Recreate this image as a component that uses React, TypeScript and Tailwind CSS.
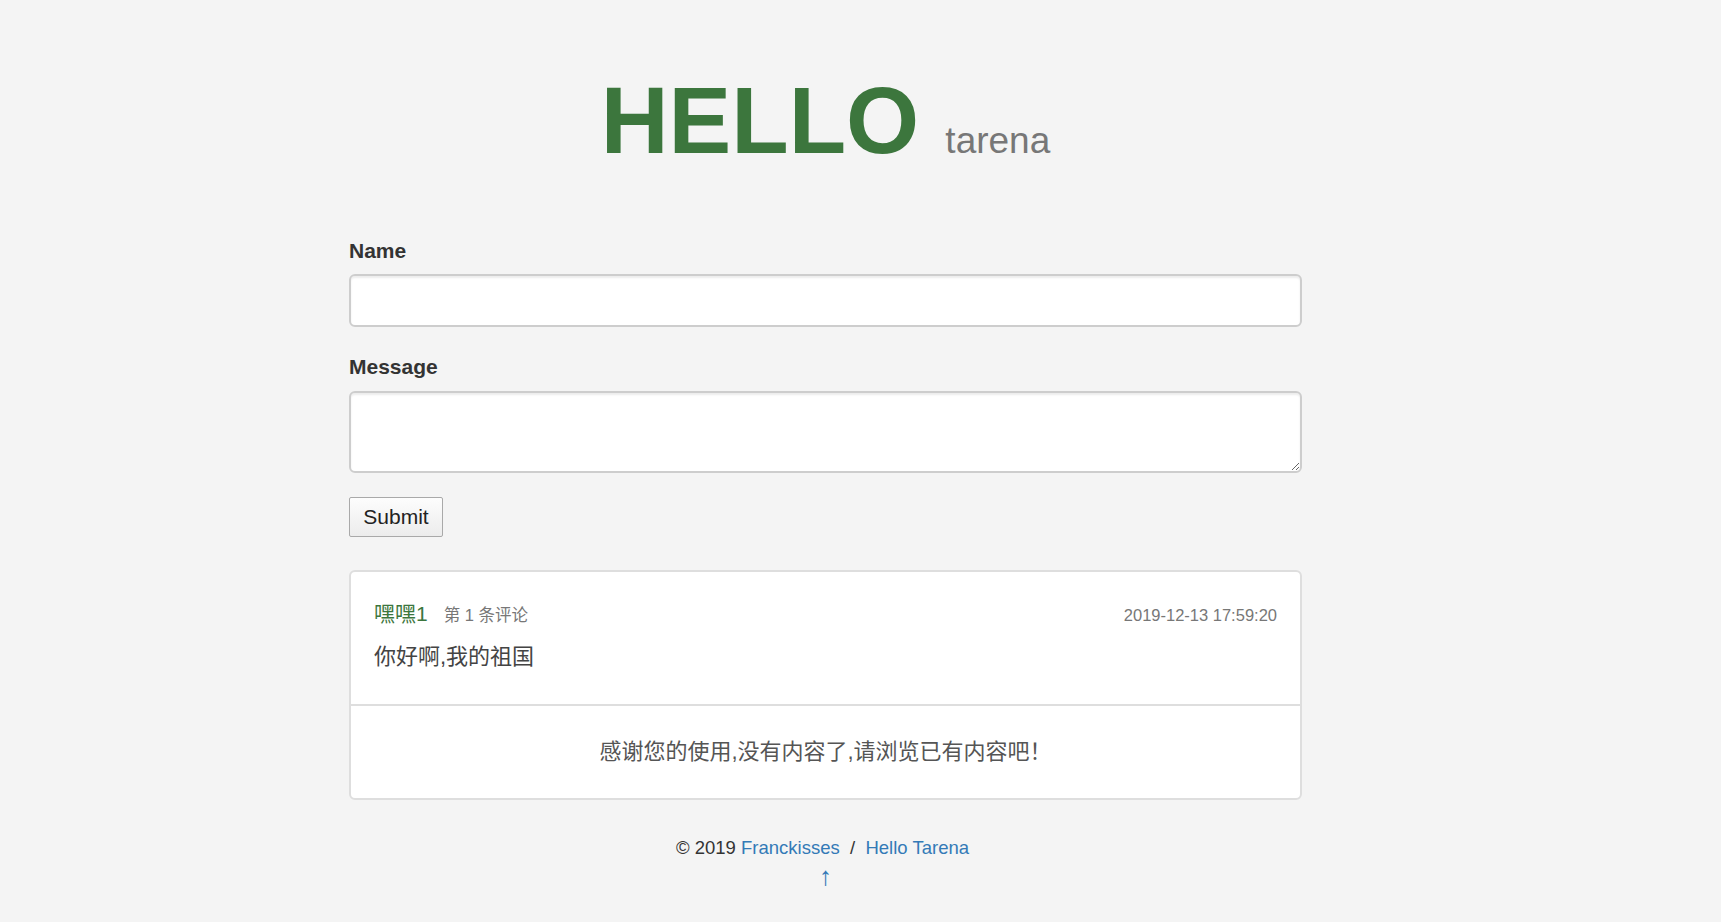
import React from 'react';

const comments = [
  {
    name: '嘿嘿1',
    index: 1,
    time: '2019-12-13 17:59:20',
    content: '你好啊,我的祖国',
  },
];

export default function App() {
  return (
    <div className="min-h-screen bg-[#f4f4f4] font-['Liberation_Sans','Noto_Sans_CJK_SC',sans-serif] text-[#333]">
      <div className="ml-[349px] w-[953px] pt-[74px]">
        {/* Heading */}
        <h1 className="text-center leading-none text-[94px] font-bold text-[#3c763d] h-[94px]">
          HELLO <small className="text-[37px] font-normal text-[#777]">tarena</small>
        </h1>

        {/* Form */}
        <form className="mt-[68px] flex flex-col" onSubmit={(e) => e.preventDefault()}>
          <label className="block text-[21px] leading-[30px] font-bold text-[#333] mb-[8px]">Name</label>
          <input
            type="text"
            className="h-[53px] w-full rounded-[6px] border-2 border-[#cdcdcd] bg-white px-[18px] text-[21px] outline-none shadow-[inset_0_2px_2px_rgba(0,0,0,0.075)]"
          />

          <label className="block mt-[25px] text-[21px] leading-[30px] font-bold text-[#333] mb-[9px]">Message</label>
          <textarea
            className="h-[82px] w-full rounded-[6px] border-2 border-[#cdcdcd] bg-white px-[18px] py-[9px] text-[21px] outline-none shadow-[inset_0_2px_2px_rgba(0,0,0,0.075)]"
          />

          <div className="mt-[24px]">
            <button
              type="submit"
              className="h-[40px] w-[94px] rounded-[2px] border border-[#a9a9a9] bg-gradient-to-b from-[#fdfdfd] to-[#ececec] text-[21px] text-[#222]"
            >
              Submit
            </button>
          </div>
        </form>

        {/* Comments panel */}
        <div className="mt-[33px] rounded-[6px] border-2 border-[#dedede] bg-white">
          {comments.map((c) => (
            <div key={c.index} className="px-[23px] pt-[27px] pb-[32px]">
              <div className="flex items-baseline justify-between leading-[30px]">
                <div className="flex items-baseline">
                  <span className="text-[21px] text-[#3c763d]">{c.name}</span>
                  <span className="ml-[16px] text-[16.5px] text-[#777]">第 {c.index} 条评论</span>
                </div>
                <span className="text-[16.5px] text-[#777]">{c.time}</span>
              </div>
              <p className="mt-[12px] text-[22px] leading-[30px] text-[#444]">{c.content}</p>
            </div>
          ))}
          <div className="h-[94px] border-t-2 border-[#dedede] pt-[32px] text-center text-[22px] leading-[28px] text-[#555]">
            感谢您的使用,没有内容了,请浏览已有内容吧！
          </div>
        </div>

        {/* Footer */}
        <footer className="mt-[34px] text-center text-[18.5px] leading-[28px] text-[#333]">
          <p className="pr-[6px]">
            © 2019 <a href="#" className="text-[#337ab7]">Franckisses</a>&nbsp; / &nbsp;
            <a href="#" className="text-[#337ab7]">Hello Tarena</a>
          </p>
          <p className="text-[26px]">
            <a href="#" className="text-[#337ab7]">↑</a>
          </p>
        </footer>
      </div>
    </div>
  );
}
